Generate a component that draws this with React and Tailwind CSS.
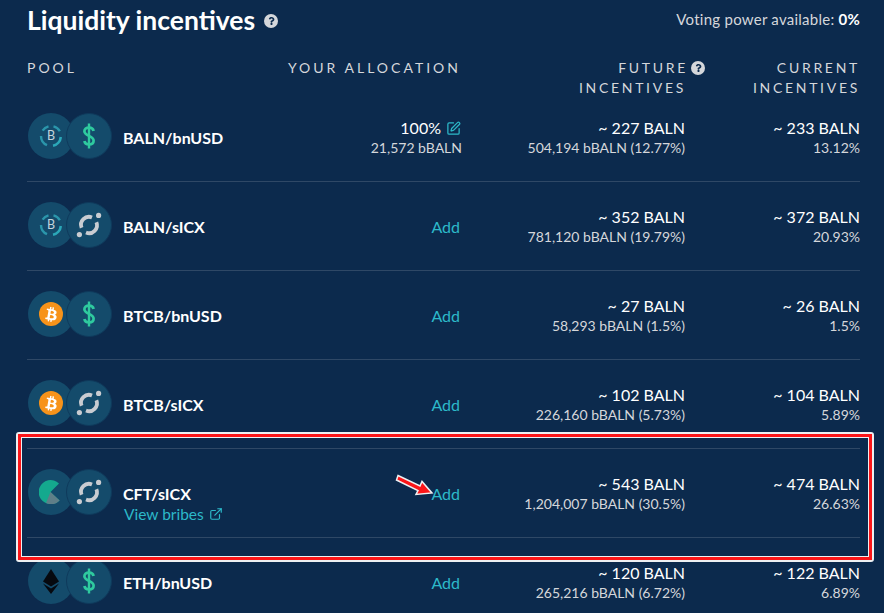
import { FaBtc, FaQuestion } from "react-icons/fa";
import { ExternalLink, SquarePen } from "lucide-react";

const HelpDot = ({ className }) => (
  <span className={`inline-flex items-center justify-center rounded-full bg-[#d5d7db] text-[#0c2a4d] ${className}`}>
    <FaQuestion className="w-[7px] h-[8px]" />
  </span>
);

const CoinCircle = ({ className = "", children }) => (
  <div className={`w-[46px] h-[46px] rounded-full bg-[#144b6b] flex items-center justify-center shrink-0 ${className}`}>
    {children}
  </div>
);

const BalnIcon = () => (
  <svg width="24" height="24" viewBox="0 0 24 24" fill="none">
    <path d="M3.6 6.6 A10 10 0 0 1 9.5 2.3" stroke="#2b96ab" strokeWidth="2.4" />
    <path d="M14.5 2.3 A10 10 0 0 1 20.8 7.2" stroke="#2b96ab" strokeWidth="2.4" />
    <path d="M21.8 13 A10 10 0 0 1 14 21.8" stroke="#2ba7b8" strokeWidth="2.6" />
    <path d="M8 21.2 A10 10 0 0 1 2 12" stroke="#2b96ab" strokeWidth="2.4" />
    <text x="12" y="16.4" textAnchor="middle" fontSize="12.5" fontFamily="Lato, sans-serif" fill="#c4d5de">B</text>
  </svg>
);

const DollarIcon = () => (
  <svg width="12" height="26" viewBox="0 0 12 26" fill="none">
    <path
      d="M10.6 8 C10.2 5.6 8.4 4.6 6 4.6 C3.2 4.6 1.4 6 1.4 8.3 C1.4 13.2 10.6 12.6 10.6 17.7 C10.6 20 8.8 21.4 6 21.4 C3.6 21.4 1.8 20.4 1.4 18"
      stroke="#2fca9f"
      strokeWidth="2.7"
    />
    <path d="M6 0.5V25.5" stroke="#2fca9f" strokeWidth="2.4" />
  </svg>
);

const IcxIcon = () => (
  <svg width="26" height="26" viewBox="0 0 26 26" fill="none">
    <path d="M5.6 15.8 A8 8 0 0 1 16 5.4" stroke="#c9ccd1" strokeWidth="3.8" />
    <path d="M20.4 10.2 A8 8 0 0 1 10 20.6" stroke="#c9ccd1" strokeWidth="3.8" />
    <circle cx="22.6" cy="3.4" r="2.6" fill="#c9ccd1" />
    <circle cx="3.4" cy="22.6" r="2.6" fill="#c9ccd1" />
  </svg>
);

const BtcIcon = () => (
  <div className="w-6 h-6 rounded-full bg-[#f7931a] flex items-center justify-center">
    <FaBtc className="w-[15px] h-[15px] text-white rotate-[10deg]" />
  </div>
);

const EthIcon = () => (
  <svg width="16" height="25" viewBox="0 0 16 25">
    <path d="M8 0 L16 12.6 L8 17.4 L0 12.6 Z" fill="#06090f" />
    <path d="M0 14.6 L8 19.4 L16 14.6 L8 25 Z" fill="#06090f" />
  </svg>
);

const CftIcon = () => (
  <svg width="24" height="24" viewBox="0 0 24 24">
    <path d="M20 3.4 A12 12 0 1 0 12 24 L12 24 A12 12 0 0 0 20.6 20.4 L11.5 12 Z" fill="#14a98e" />
    <path d="M11.5 12 L20.6 20.4 A12 12 0 0 1 7 23 Z" fill="#5f7f88" />
  </svg>
);

const rows = [
  { pool: "BALN/bnUSD", a: <BalnIcon />, b: <DollarIcon />, fut: "~ 227 BALN", futSub: "504,194 bBALN (12.77%)", cur: "~ 233 BALN", curSub: "13.12%", mine: true },
  { pool: "BALN/sICX", a: <BalnIcon />, b: <IcxIcon />, fut: "~ 352 BALN", futSub: "781,120 bBALN (19.79%)", cur: "~ 372 BALN", curSub: "20.93%" },
  { pool: "BTCB/bnUSD", a: <BtcIcon />, b: <DollarIcon />, fut: "~ 27 BALN", futSub: "58,293 bBALN (1.5%)", cur: "~ 26 BALN", curSub: "1.5%" },
  { pool: "BTCB/sICX", a: <BtcIcon />, b: <IcxIcon />, fut: "~ 102 BALN", futSub: "226,160 bBALN (5.73%)", cur: "~ 104 BALN", curSub: "5.89%" },
  { pool: "CFT/sICX", a: <CftIcon />, b: <IcxIcon />, fut: "~ 543 BALN", futSub: "1,204,007 bBALN (30.5%)", cur: "~ 474 BALN", curSub: "26.63%", bribes: true },
  { pool: "ETH/bnUSD", a: <EthIcon />, b: <DollarIcon />, fut: "~ 120 BALN", futSub: "265,216 bBALN (6.72%)", cur: "~ 122 BALN", curSub: "6.89%" },
];

const gridCols = "grid grid-cols-[233px_200px_225px_175px]";

const Row = ({ row }) => (
  <div className={`${gridCols} items-center h-[89px] pt-[2px] shrink-0 border-b border-[#2f4866]`}>
    <div className="flex items-center pl-px">
      <div className="flex mb-1">
        <CoinCircle>{row.a}</CoinCircle>
        <CoinCircle className="-ml-2 border border-[#0f3a5c]">{row.b}</CoinCircle>
      </div>
      <div className={`ml-[11px] ${row.bribes ? "pt-5" : ""}`}>
        <div className="text-[16px] leading-5 font-bold text-white">{row.pool}</div>
        {row.bribes && (
          <div className="flex items-center text-[15.5px] leading-5 text-[#2cb9c9] ml-px">
            View bribes
            <ExternalLink className="w-[14px] h-[14px] ml-[5px]" />
          </div>
        )}
      </div>
    </div>
    <div className="text-right">
      {row.mine ? (
        <>
          <div className="flex items-center justify-end text-[16px] leading-5 text-white mr-[-1px]">
            100%
            <SquarePen className="w-[15px] h-[15px] ml-[5px] text-[#2cb9c9]" />
          </div>
          <div className="text-[14px] leading-[20px] text-[#d5d7db] mr-[-2px]">21,572 bBALN</div>
        </>
      ) : (
        <span className="text-[16px] text-[#2cb9c9]">Add</span>
      )}
    </div>
    <div className="text-right">
      <div className="text-[16px] leading-5 text-white">{row.fut}</div>
      <div className="text-[14px] leading-5 text-[#d5d7db]">{row.futSub}</div>
    </div>
    <div className="text-right">
      <div className="text-[16px] leading-5 text-white">{row.cur}</div>
      <div className="text-[14px] leading-5 text-[#d5d7db]">{row.curSub}</div>
    </div>
  </div>
);

export default function App() {
  return (
    <div className="relative h-screen overflow-hidden bg-[#0c2a4d] pl-[27px] pr-[24px] font-['Lato',sans-serif]">
      <div className="flex items-start justify-between h-[58px] pt-[2px]">
        <div className="flex items-center">
          <h1 className="text-[26.5px] leading-9 font-bold text-white">Liquidity incentives</h1>
          <HelpDot className="w-[14px] h-[14px] ml-[9px] mt-[2px]" />
        </div>
        <div className="text-[15px] leading-5 tracking-[0.25px] text-[#d5d7db] mt-[7px]">
          Voting power available: <span className="font-bold text-white">0%</span>
        </div>
      </div>
      <div className={`${gridCols} text-[14px] leading-5 tracking-[3px] text-[#d5d7db] h-[35px]`}>
        <div>POOL</div>
        <div className="text-right mr-[-1px]">YOUR ALLOCATION</div>
        <div className="text-right mr-[-1px] tracking-[2.7px]">
          <div className="flex items-center justify-end mr-[-19px]">
            FUTURE
            <HelpDot className="w-[14px] h-[14px] ml-[3px]" />
          </div>
          <div>INCENTIVES</div>
        </div>
        <div className="text-right tracking-[2.7px]">
          <div>CURRENT</div>
          <div>INCENTIVES</div>
        </div>
      </div>
      <div className="flex flex-col">
        {rows.map((row) => (
          <Row key={row.pool} row={row} />
        ))}
      </div>

      <div className="absolute left-[16px] top-[432px] w-[858px] h-[130px] rounded-[3px] border-[2px] border-[#eef0f2]">
        <div className="w-full h-full border-[3px] border-[#fb1518]">
          <div className="w-full h-full border border-[#eef0f2]" />
        </div>
      </div>
      <svg className="absolute left-[395px] top-[473px]" width="40" height="24" viewBox="0 0 40 24">
        <path
          d="M3 2.5 L25 13 L27 8.5 L37 20 L21 21.5 L23 17.5 L1.5 7 Z"
          fill="#fb1518"
          stroke="#eef0f2"
          strokeWidth="1.5"
        />
      </svg>
    </div>
  );
}
